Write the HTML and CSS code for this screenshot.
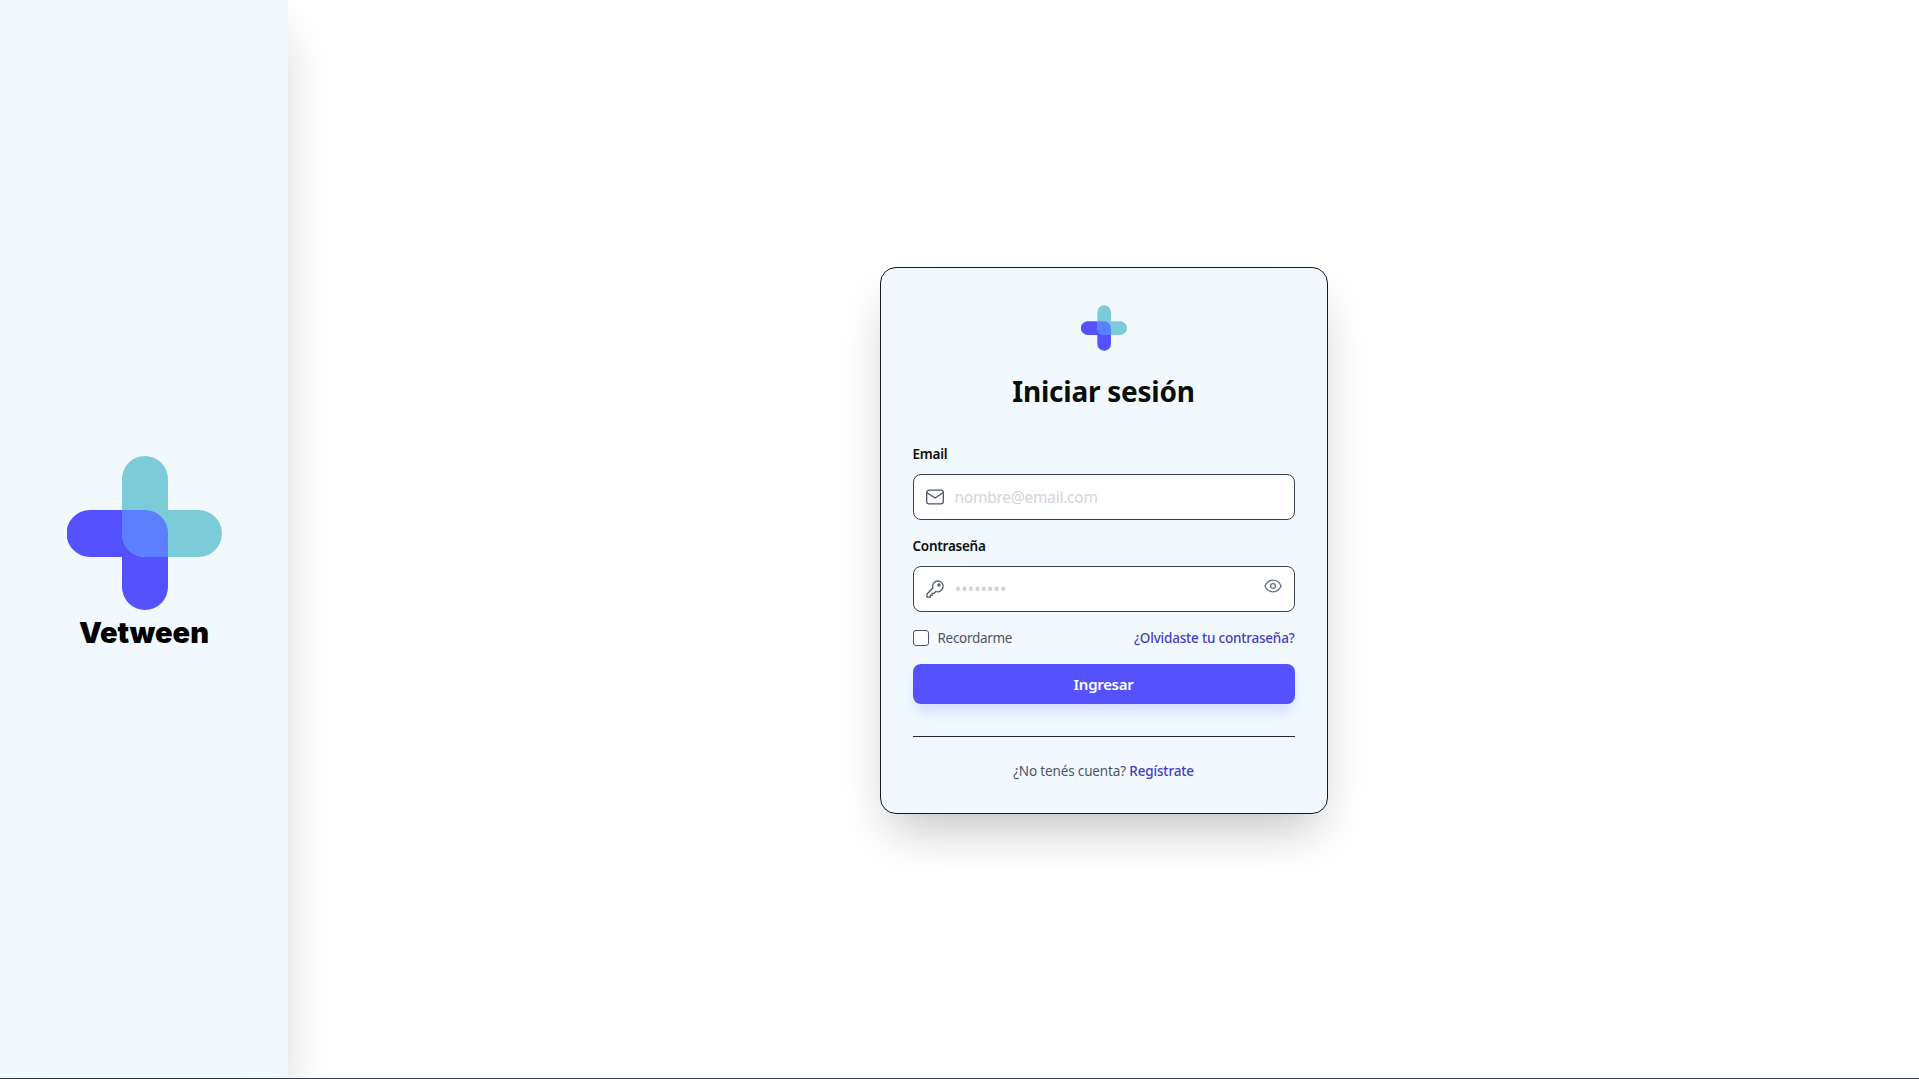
FILE: index.html
```html
<!DOCTYPE html>
<html lang="es">
<head>
    <meta charset="UTF-8">
    <meta name="viewport" content="width=device-width, initial-scale=1.0">
    <title>Vetween - Iniciar sesión</title>
    <link rel="stylesheet" href="styles.css">
</head>
<body>
    <div class="page">
        <!-- Panel lateral -->
        <aside class="sidebar">
            <svg class="logo-big" viewBox="0 0 155 154">
                <path fill="#5551ff" d="M23 54H78A23 23 0 0 1 101 77V131A23 23 0 0 1 55 131V101H23A23.5 23.5 0 0 1 23 54Z"/>
                <path fill="#7ccbd8" d="M55 23A23 23 0 0 1 101 23V54H131.5A23.5 23.5 0 0 1 131.5 101H78A23 23 0 0 1 55 78Z"/>
                <path fill="#5b7fff" d="M55 54H78A23 23 0 0 1 101 77V101H78A23 23 0 0 1 55 78Z"/>
            </svg>
            <div class="brand">Vetween</div>
        </aside>

        <main class="content">
            <div class="card">
                <div class="card-head">
                    <svg class="logo-small" viewBox="0 0 155 154">
                        <path fill="#5551ff" d="M23 54H78A23 23 0 0 1 101 77V131A23 23 0 0 1 55 131V101H23A23.5 23.5 0 0 1 23 54Z"/>
                        <path fill="#7ccbd8" d="M55 23A23 23 0 0 1 101 23V54H131.5A23.5 23.5 0 0 1 131.5 101H78A23 23 0 0 1 55 78Z"/>
                        <path fill="#5b7fff" d="M55 54H78A23 23 0 0 1 101 77V101H78A23 23 0 0 1 55 78Z"/>
                    </svg>
                    <h1>Iniciar sesión</h1>
                </div>

                <form class="login-form">
                    <div class="field">
                        <label for="email">Email</label>
                        <div class="input-wrap">
                            <svg class="icon icon-left" viewBox="0 0 18 18">
                                <rect x="0.7" y="2.200" width="16.600" height="13.600" rx="2.400"/>
                                <path d="M1 4.800 9 10l8-5.200"/>
                            </svg>
                            <input id="email" type="email" placeholder="nombre@email.com">
                        </div>
                    </div>

                    <div class="field">
                        <label for="password">Contraseña</label>
                        <div class="input-wrap">
                            <svg class="icon icon-left" viewBox="0 0 18 18">
                                <path d="M11.6.8a5.5 5.5 0 0 1 5.5 5.5 5.5 5.5 0 0 1-7.3 5.2L8 13.4H6.2v1.9H4.3v1.9H1V14l5.9-6a5.5 5.5 0 0 1 4.7-7.2Z"/>
                                <circle cx="12.9" cy="5" r="1"/>
                            </svg>
                            <input id="password" class="pass-input" type="text" placeholder="••••••••">
                            <svg class="icon icon-eye" viewBox="0 0 18 14">
                                <path d="M.9 7C2.6 3.2 5.6 1.2 9 1.2s6.4 2 8.1 5.8c-1.700 3.800-4.700 5.800-8.100 5.800S2.600 10.800.9 7Z"/>
                                <circle cx="9" cy="7" r="2.400"/>
                            </svg>
                        </div>
                    </div>

                    <div class="form-row">
                        <label class="remember">
                            <span class="checkbox"></span>
                            Recordarme
                        </label>
                        <a class="link" href="#">¿Olvidaste tu contraseña?</a>
                    </div>

                    <button class="submit" type="button">Ingresar</button>
                </form>

                <div class="card-foot">
                    ¿No tenés cuenta? <a class="link" href="#">Regístrate</a>
                </div>
            </div>
        </main>
    </div>
</body>
</html>
```

FILE: styles.css
```css
* {
    box-sizing: border-box;
}

body {
    font-family: 'Noto Sans', 'Open Sans', sans-serif;
    background-color: #fff;
    color: #0a0f0a;
    margin: 0;
    padding: 0;
    overflow: hidden;
}

.page {
    display: flex;
    height: 1079px;
    border-bottom: 1px solid #374151;
}

/* Panel lateral */
.sidebar {
    width: 288px;
    flex-shrink: 0;
    display: flex;
    flex-direction: column;
    align-items: center;
    justify-content: center;
    gap: 5px;
    padding-top: 29px;
    background-color: #f1f9ff;
    box-shadow: 0 25px 50px -12px rgba(0, 0, 0, 0.25);
}

.logo-big {
    width: 155px;
    height: 154px;
    display: block;
}

.brand {
    font-family: 'Inter', sans-serif;
    font-size: 29px;
    font-weight: 900;
    line-height: 36px;
    color: #000;
}

.content {
    flex: 1;
    display: flex;
    align-items: center;
    justify-content: center;
    padding-top: 3px;
}

.card {
    width: 448px;
    height: 547px;
    padding: 37px 32px 0;
    background-color: #f1f9ff;
    border: 1px solid #111827;
    border-radius: 16px;
    box-shadow: 0 25px 50px -12px rgba(0, 0, 0, 0.25);
}

.card-head {
    display: flex;
    flex-direction: column;
    align-items: center;
}

.logo-small {
    width: 46px;
    height: 46px;
    display: block;
}

h1 {
    margin: 22px 0 0;
    font-size: 28px;
    line-height: 36px;
    font-weight: 700;
    letter-spacing: -0.25px;
}

.login-form {
    margin-top: 35px;
}

.field {
    margin-bottom: 16px;
}

.field label {
    display: block;
    margin-bottom: 10px;
    font-size: 13.5px;
    line-height: 20px;
    font-weight: 600;
    letter-spacing: -0.25px;
}

.input-wrap {
    position: relative;
}

.input-wrap input {
    display: block;
    width: 100%;
    height: 46px;
    padding: 0 40px 0 41px;
    font-family: inherit;
    font-size: 15.5px;
    letter-spacing: -0.25px;
    color: #111827;
    background-color: #fff;
    border: 1px solid #374151;
    border-radius: 8px;
    outline: none;
}

.input-wrap input::placeholder {
    color: #d1d5db;
    opacity: 1;
}

.input-wrap .pass-input::placeholder {
    font-size: 18px;
    letter-spacing: -0.3px;
}

.icon {
    position: absolute;
    fill: none;
    stroke: #4b5563;
    stroke-width: 1.3;
    stroke-linecap: round;
    stroke-linejoin: round;
}

.icon-left {
    left: 13px;
    top: 14px;
    width: 18px;
    height: 18px;
}

.icon-eye {
    right: 13px;
    top: 13px;
    width: 18px;
    height: 14px;
    stroke: #6b7280;
}

.form-row {
    display: flex;
    align-items: center;
    justify-content: space-between;
    height: 20px;
    font-size: 13.5px;
    letter-spacing: -0.2px;
}

.remember {
    display: flex;
    align-items: center;
    gap: 9px;
    color: #4b5563;
    letter-spacing: -0.3px;
}

.checkbox {
    width: 16px;
    height: 16px;
    background-color: #fff;
    border: 1px solid #4b5563;
    border-radius: 3px;
}

.link {
    color: #483dc0;
    font-weight: 500;
    text-decoration: none;
}

.submit {
    display: block;
    width: 100%;
    height: 40px;
    margin-top: 16px;
    font-family: inherit;
    font-size: 15px;
    font-weight: 600;
    letter-spacing: -0.3px;
    color: #fff;
    background-color: #5551ff;
    border: none;
    border-radius: 8px;
    box-shadow: 0 10px 15px -3px rgba(85, 81, 255, 0.2);
}

.card-foot {
    margin-top: 32px;
    padding-top: 24px;
    border-top: 1px solid #1f2937;
    text-align: center;
    font-size: 13.5px;
    letter-spacing: -0.15px;
    line-height: 20px;
    color: #4b5563;
}
```
